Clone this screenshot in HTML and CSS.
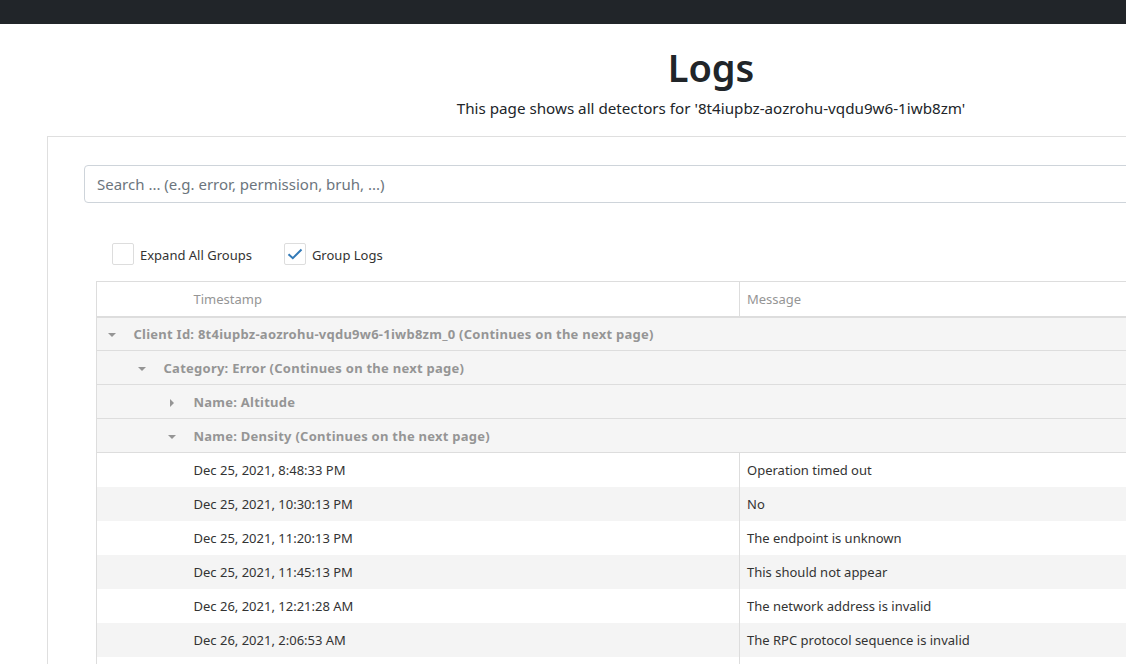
FILE: index.html
```html
<!DOCTYPE html>
<html>
<head>
<meta charset="utf-8">
<link rel="stylesheet" href="styles.css">
</head>
<body>
<div class="page">
  <nav class="navbar"></nav>
  <header class="header">
    <h1 class="title">Logs</h1>
    <p class="subtitle">This page shows all detectors for '8t4iupbz-aozrohu-vqdu9w6-1iwb8zm'</p>
  </header>
  <section class="card">
    <div class="search"><span class="placeholder">Search ... (e.g. error, permission, bruh, ...)</span></div>
    <div class="options">
      <label class="check"><span class="box"></span><span class="check-label">Expand All Groups</span></label>
      <label class="check"><span class="box checked"><svg width="16" height="12" viewBox="0 0 16 12"><path d="M1.5 6.2 L5.8 10.2 L14.5 1.5" fill="none" stroke="#337ab7" stroke-width="2"/></svg></span><span class="check-label">Group Logs</span></label>
    </div>
    <table class="grid">
      <colgroup><col class="c-ind"><col class="c-ind"><col class="c-ind"><col class="c-ts"><col class="c-msg"></colgroup>
      <thead>
        <tr class="head"><th></th><th></th><th></th><th>Timestamp</th><th class="msg">Message</th></tr>
      </thead>
      <tbody>
        <tr class="group"><td class="arrow"><span class="tri down"></span></td><td colspan="4">Client Id: 8t4iupbz-aozrohu-vqdu9w6-1iwb8zm_0 (Continues on the next page)</td></tr>
        <tr class="group"><td></td><td class="arrow"><span class="tri down"></span></td><td colspan="3">Category: Error (Continues on the next page)</td></tr>
        <tr class="group"><td></td><td></td><td class="arrow"><span class="tri right"></span></td><td colspan="2">Name: Altitude</td></tr>
        <tr class="group"><td></td><td></td><td class="arrow"><span class="tri down"></span></td><td colspan="2">Name: Density (Continues on the next page)</td></tr>
        <tr class="data"><td></td><td></td><td></td><td>Dec 25, 2021, 8:48:33 PM</td><td class="msg">Operation timed out</td></tr>
        <tr class="data alt"><td></td><td></td><td></td><td>Dec 25, 2021, 10:30:13 PM</td><td class="msg">No</td></tr>
        <tr class="data"><td></td><td></td><td></td><td>Dec 25, 2021, 11:20:13 PM</td><td class="msg">The endpoint is unknown</td></tr>
        <tr class="data alt"><td></td><td></td><td></td><td>Dec 25, 2021, 11:45:13 PM</td><td class="msg">This should not appear</td></tr>
        <tr class="data"><td></td><td></td><td></td><td>Dec 26, 2021, 12:21:28 AM</td><td class="msg">The network address is invalid</td></tr>
        <tr class="data alt"><td></td><td></td><td></td><td>Dec 26, 2021, 2:06:53 AM</td><td class="msg">The RPC protocol sequence is invalid</td></tr>
        <tr class="data"><td></td><td></td><td></td><td></td><td class="msg"></td></tr>
      </tbody>
    </table>
  </section>
</div>
</body>
</html>
```
FILE: styles.css
```css
html, body {
  margin: 0;
  padding: 0;
  overflow: hidden;
  background: #fff;
}
body {
  font-family: "Noto Sans", "Open Sans", sans-serif;
  color: #212529;
}
.page {
  width: 1422px;
}
.navbar {
  height: 24px;
  background: #212529;
}
.header {
  text-align: center;
  padding-top: 19px;
}
.title {
  margin: 0;
  font-size: 38px;
  line-height: 48px;
  font-weight: 600;
  color: #212529;
}
.subtitle {
  margin: 5px 0 0;
  font-size: 15.2px;
  line-height: 24px;
}
.card {
  margin: 16px 47px 0 47px;
  border: 1px solid #dfdfdf;
  padding: 28px 36px 0 36px;
  height: 600px;
}
.search {
  height: 38px;
  box-sizing: border-box;
  border: 1px solid #ced4da;
  border-radius: 4px;
  padding: 0 12px;
  display: flex;
  align-items: center;
}
.placeholder {
  font-size: 15px;
  color: #6c757d;
}
.options {
  display: flex;
  gap: 32px;
  margin: 40px 0 16px 28px;
}
.check {
  display: flex;
  align-items: center;
  gap: 6px;
}
.box {
  width: 22px;
  height: 22px;
  box-sizing: border-box;
  border: 1px solid #dddddd;
  border-radius: 2px;
  display: flex;
  align-items: center;
  justify-content: center;
}
.check-label {
  font-size: 13px;
  line-height: 20px;
  padding-top: 1px;
  color: #333;
}
.grid {
  margin-left: 12px;
  width: 1230px;
  border-collapse: collapse;
  table-layout: fixed;
  font-size: 13px;
  border-left: 1px solid #dddddd;
  border-top: 1px solid #dddddd;
}
.c-ind { width: 30px; }
.c-ts { width: 553px; }
.grid th, .grid td {
  height: 34px;
  padding: 0 0 0 7px;
  box-sizing: border-box;
  text-align: left;
  white-space: nowrap;
  overflow: hidden;
}
.grid th {
  height: 35px;
  font-weight: 400;
  color: #959595;
  border-bottom: 2px solid #dddddd;
}
.grid .msg {
  border-left: 1px solid #dddddd;
}
.group td {
  background: #f5f5f5;
  color: #959595;
  font-weight: 700;
  letter-spacing: 0.25px;
  border-bottom: 1px solid #dddddd;
}
.group td.arrow {
  padding: 0;
  text-align: center;
}
.tri {
  display: inline-block;
  width: 0;
  height: 0;
  vertical-align: middle;
}
.tri.down {
  border-left: 4px solid transparent;
  border-right: 4px solid transparent;
  border-top: 4px solid #959595;
}
.tri.right {
  border-top: 4px solid transparent;
  border-bottom: 4px solid transparent;
  border-left: 4px solid #959595;
}
.data td {
  color: #333;
  background: #fff;
}
.data.alt td {
  background: #f4f4f4;
}
```
